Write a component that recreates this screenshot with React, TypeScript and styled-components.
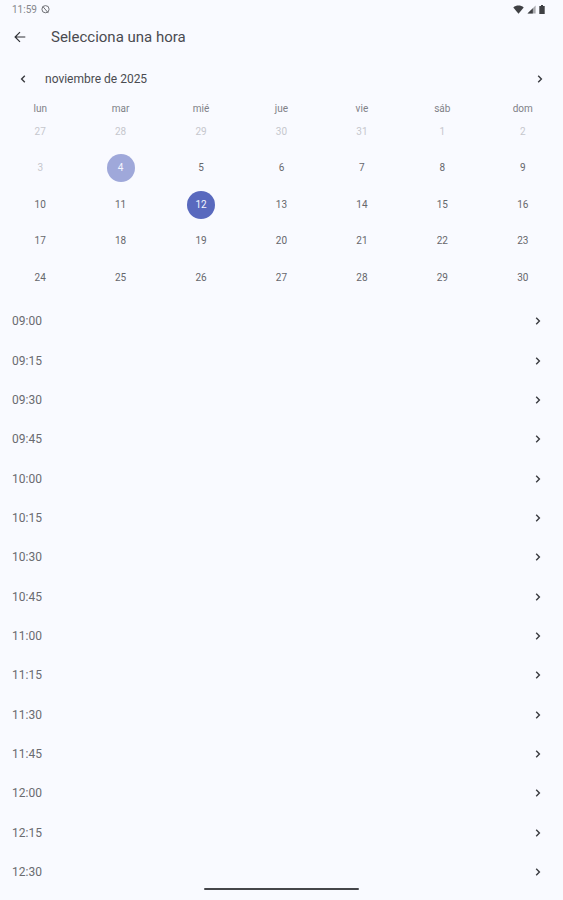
import React from "react";
import styled, { createGlobalStyle } from "styled-components";

const GlobalStyle = createGlobalStyle`
  * { box-sizing: border-box; }
  body {
    margin: 0;
    background: #f9faff;
    color: #4a4b50;
    font-family: Roboto, "Liberation Sans", sans-serif;
  }
  button {
    margin: 0;
    padding: 0;
    border: 0;
    background: none;
    color: inherit;
    font: inherit;
    cursor: pointer;
  }
`;

const Page = styled.main`
  display: flex;
  flex-direction: column;
  min-height: 100vh;
`;

const StatusBar = styled.div`
  display: flex;
  align-items: center;
  justify-content: space-between;
  height: 18px;
  padding: 0 18px 0 12px;
  font-size: 10px;
  color: #85868b;
`;

const StatusGroup = styled.div<{ $gap: number }>`
  display: flex;
  align-items: center;
  gap: ${({ $gap }) => $gap}px;
`;

const AppBar = styled.header`
  display: flex;
  align-items: center;
  gap: 21px;
  height: 38px;
  padding: 0 10px;
`;

const IconButton = styled.button`
  display: flex;
  align-items: center;
  justify-content: center;
  width: 20px;
  height: 20px;
  color: #303136;
`;

const Title = styled.h1`
  margin: 0;
  font-size: 15px;
  font-weight: 400;
  line-height: 20px;
`;

const MonthBar = styled.div`
  display: flex;
  align-items: center;
  gap: 12px;
  height: 46px;
  padding: 0 13px;
`;

const MonthName = styled.h2`
  flex: 1;
  margin: 0;
  font-size: 12px;
  font-weight: 400;
  line-height: 16px;
`;

const Calendar = styled.table`
  width: 100%;
  margin-top: 3px;
  table-layout: fixed;
  border-collapse: collapse;
  text-align: center;
`;

const WeekDay = styled.th`
  height: 8px;
  padding: 0;
  font-size: 10px;
  font-weight: 400;
  line-height: 8px;
  color: #808187;
`;

const Week = styled.tr`
  height: 37px;
  &:nth-child(even) { height: 36px; }
`;

const DayCell = styled.td`
  padding: 0;
  vertical-align: middle;
`;

type DayState = "normal" | "muted" | "today" | "selected";

const dayColors: Record<DayState, { text: string; fill: string }> = {
  normal: { text: "#66676c", fill: "transparent" },
  muted: { text: "#c6c7cd", fill: "transparent" },
  today: { text: "#f4f5ff", fill: "#9fa8da" },
  selected: { text: "#f4f5ff", fill: "#5969be" },
};

const Day = styled.button<{ $state: DayState }>`
  && {
    display: block;
    width: 28px;
    height: 28px;
    margin: 0 auto;
    border-radius: 50%;
    font-size: 10px;
    line-height: 28px;
    color: ${({ $state }) => dayColors[$state].text};
    background: ${({ $state }) => dayColors[$state].fill};
  }
`;

const SlotList = styled.ul`
  margin: 5px 0 0;
  padding: 0;
  list-style: none;
`;

const SlotItem = styled.li`
  display: flex;
  height: 39px;
  &:nth-child(3n + 1) { height: 40px; }
`;

const Slot = styled.button`
  && {
    display: flex;
    flex: 1;
    align-items: center;
    justify-content: space-between;
    padding: 0 18px 0 12px;
    font-size: 12px;
    color: #6a6b70;
  }
`;

const HomeIndicator = styled.div`
  position: fixed;
  bottom: 10px;
  left: 50%;
  width: 155px;
  height: 2px;
  margin-left: -78px;
  border-radius: 1px;
  background: #45464a;
`;

const Chevron = ({ left = false }: { left?: boolean }) => (
  <svg width="14" height="14" viewBox="0 0 14 14" fill="none" stroke="#3a3b40" strokeWidth="1.4" aria-hidden="true">
    <path d={left ? "M8.8 3.8 5.6 7l3.2 3.2" : "M5.2 3.8 8.4 7l-3.2 3.2"} />
  </svg>
);

const BackArrow = () => (
  <svg width="14" height="14" viewBox="0 0 14 14" fill="none" stroke="currentColor" strokeWidth="1.2" aria-hidden="true">
    <path d="M12.3 7H2.2M7 2.1 2.1 7 7 11.9" />
  </svg>
);

const BlockedIcon = () => (
  <svg width="9" height="9" viewBox="0 0 9 9" fill="none" stroke="#707176" strokeWidth="1" aria-hidden="true">
    <circle cx="4.5" cy="4.2" r="3.6" />
    <path d="M2 1.7l5.4 6.4" />
  </svg>
);

const WifiIcon = () => (
  <svg width="11" height="9" viewBox="0 0 11 9" fill="#3f4044" aria-hidden="true">
    <path d="M0.3 2.4C3.2-.1 7.8-.1 10.7 2.4L5.5 8.8z" />
  </svg>
);

const SignalIcon = () => (
  <svg width="9" height="9" viewBox="0 0 9 9" aria-hidden="true">
    <path d="M8.6.5v8.1H.5z" fill="#a9aaae" />
    <path d="M5.8 3.3v5.3H.5z" fill="#3f4044" />
  </svg>
);

const BatteryIcon = () => (
  <svg width="6" height="9" viewBox="0 0 6 9" fill="#3f4044" aria-hidden="true">
    <path d="M2 0h2v1h1.7v8H.3V1H2z" />
  </svg>
);

const weekDays = ["lun", "mar", "mié", "jue", "vie", "sáb", "dom"];
const weeks = [
  [27, 28, 29, 30, 31, 1, 2],
  [3, 4, 5, 6, 7, 8, 9],
  [10, 11, 12, 13, 14, 15, 16],
  [17, 18, 19, 20, 21, 22, 23],
  [24, 25, 26, 27, 28, 29, 30],
];

const dayState = (week: number, day: number): DayState => {
  if (week === 0 || day === 3) return "muted";
  if (day === 4) return "today";
  return day === 12 ? "selected" : "normal";
};

const slots = Array.from({ length: 15 }, (_, i) => {
  const minutes = 9 * 60 + i * 15;
  const pad = (n: number) => String(n).padStart(2, "0");
  return `${pad(Math.floor(minutes / 60))}:${pad(minutes % 60)}`;
});

export default function App() {
  return (
    <Page>
      <GlobalStyle />
      <StatusBar>
        <StatusGroup $gap={4}>
          <span>11:59</span>
          <BlockedIcon />
        </StatusGroup>
        <StatusGroup $gap={3}>
          <WifiIcon />
          <SignalIcon />
          <BatteryIcon />
        </StatusGroup>
      </StatusBar>
      <AppBar>
        <IconButton aria-label="Atrás"><BackArrow /></IconButton>
        <Title>Selecciona una hora</Title>
      </AppBar>
      <MonthBar>
        <IconButton aria-label="Mes anterior"><Chevron left /></IconButton>
        <MonthName>noviembre de 2025</MonthName>
        <IconButton aria-label="Mes siguiente"><Chevron /></IconButton>
      </MonthBar>
      <Calendar aria-label="noviembre de 2025">
        <thead>
          <tr>{weekDays.map((name) => <WeekDay key={name} scope="col">{name}</WeekDay>)}</tr>
        </thead>
        <tbody>
          {weeks.map((days, week) => (
            <Week key={week}>
              {days.map((day) => (
                <DayCell key={day}>
                  <Day $state={dayState(week, day)}>{day}</Day>
                </DayCell>
              ))}
            </Week>
          ))}
        </tbody>
      </Calendar>
      <SlotList>
        {slots.map((time) => (
          <SlotItem key={time}>
            <Slot>{time}<Chevron /></Slot>
          </SlotItem>
        ))}
      </SlotList>
      <HomeIndicator />
    </Page>
  );
}
